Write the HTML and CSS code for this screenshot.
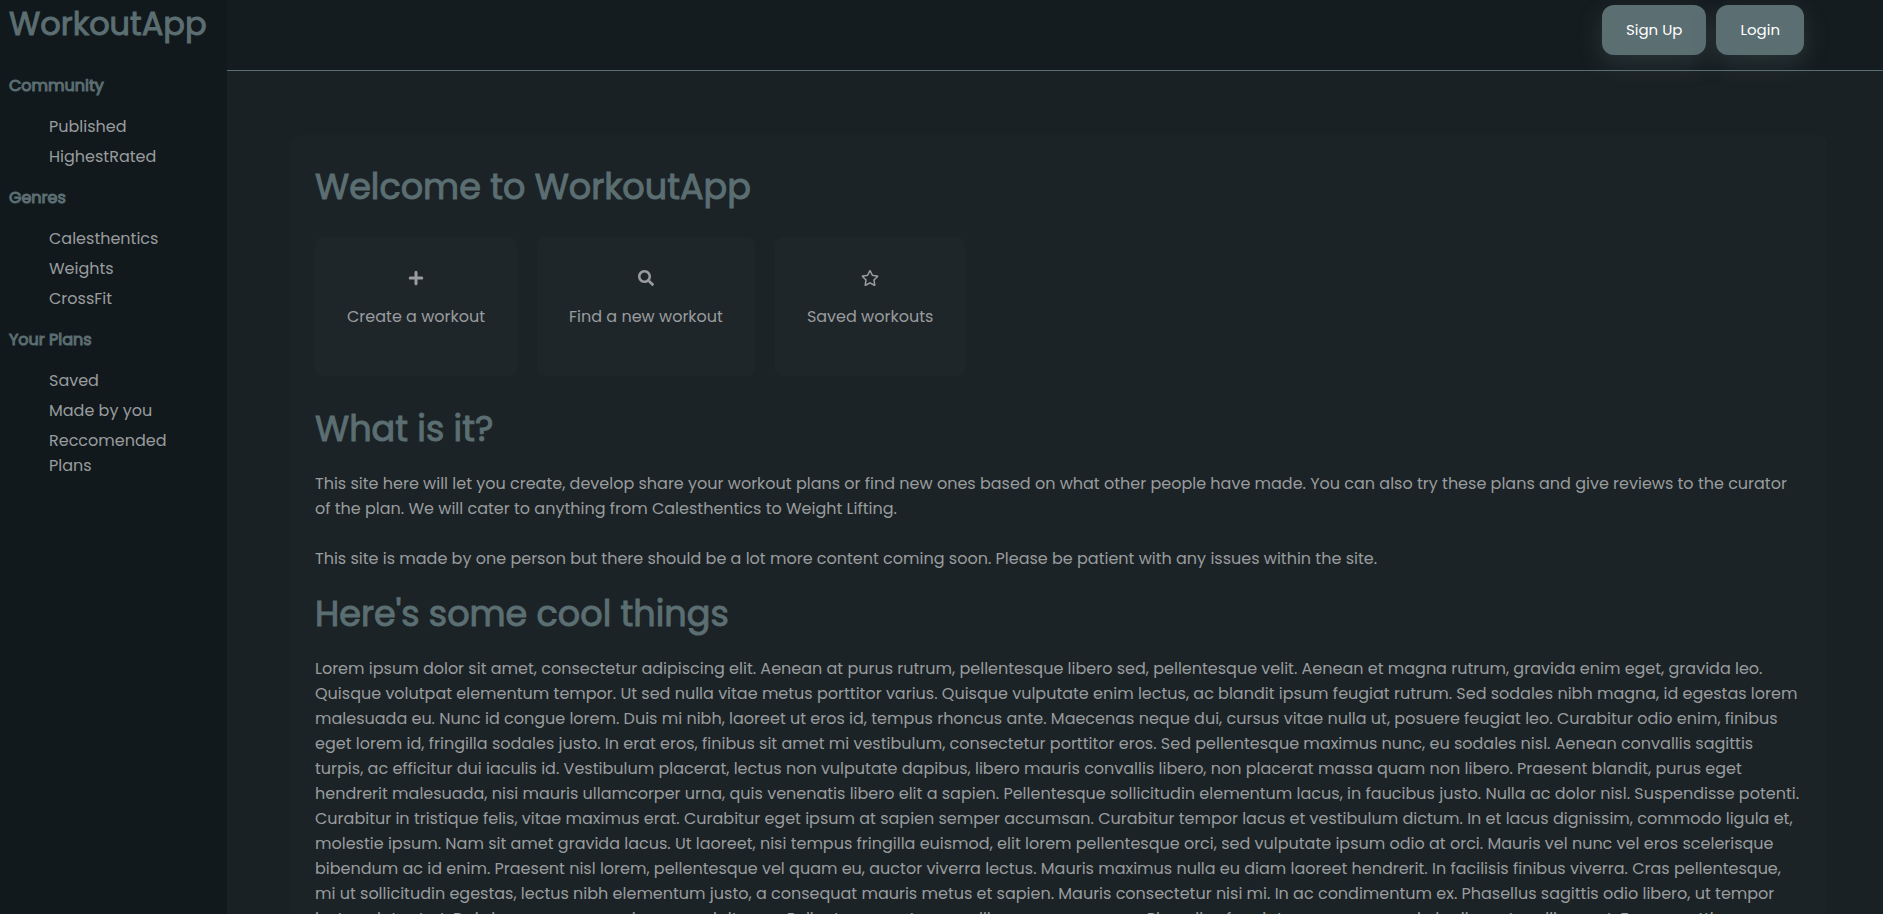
FILE: index.html
```html
<!DOCTYPE html>
<html lang="en">
<head>
<meta charset="utf-8">
<title>WorkoutApp</title>
<link rel="stylesheet" href="styles.css">
</head>
<body>
<div class="app">
  <aside class="sidebar">
    <h1 class="brand">WorkoutApp</h1>
    <nav class="nav">
      <h2 class="nav-title">Community</h2>
      <ul class="nav-list">
        <li><a href="#">Published</a></li>
        <li><a href="#">HighestRated</a></li>
      </ul>
      <h2 class="nav-title">Genres</h2>
      <ul class="nav-list">
        <li><a href="#">Calesthentics</a></li>
        <li><a href="#">Weights</a></li>
        <li><a href="#">CrossFit</a></li>
      </ul>
      <h2 class="nav-title">Your Plans</h2>
      <ul class="nav-list">
        <li><a href="#">Saved</a></li>
        <li><a href="#">Made by you</a></li>
        <li><a href="#">Reccomended Plans</a></li>
      </ul>
    </nav>
  </aside>
  <div class="page">
    <header class="topbar">
      <button class="button" type="button">Sign Up</button>
      <button class="button" type="button">Login</button>
    </header>
    <main class="panel">
      <h2 class="heading">Welcome to WorkoutApp</h2>
      <div class="cards">
        <a class="card" href="#">
          <svg class="icon" viewBox="0 0 16 16" aria-hidden="true"><path d="M8 2.2v11.6M2.2 8h11.6" fill="none" stroke="currentColor" stroke-width="3" stroke-linecap="round"/></svg>
          <span>Create a workout</span>
        </a>
        <a class="card" href="#">
          <svg class="icon" viewBox="0 0 512 512" aria-hidden="true"><path fill="currentColor" d="M505 442.700 405.300 343c-4.500-4.500-10.600-7-17-7H372c27.600-35.300 44-79.700 44-128C416 93.100 322.900 0 208 0S0 93.100 0 208s93.100 208 208 208c48.300 0 92.700-16.400 128-44v16.300c0 6.400 2.500 12.500 7 17l99.700 99.700c9.400 9.400 24.600 9.400 33.900 0l28.300-28.300c9.400-9.400 9.400-24.600.1-34zM208 336c-70.700 0-128-57.200-128-128 0-70.700 57.200-128 128-128 70.700 0 128 57.200 128 128 0 70.700-57.200 128-128 128z"/></svg>
          <span>Find a new workout</span>
        </a>
        <a class="card" href="#">
          <svg class="icon icon-star" viewBox="0 0 576 512" aria-hidden="true"><path fill="currentColor" d="M528.100 171.500L382 150.200 316.700 17.800c-11.700-23.600-45.600-23.900-57.400 0L194 150.200 47.900 171.500c-26.200 3.800-36.700 36.100-17.700 54.600l105.700 103-25 145.500c-4.500 26.300 23.200 46 46.400 33.700L288 439.600l130.700 68.700c23.200 12.200 50.900-7.400 46.400-33.700l-25-145.500 105.700-103c19-18.500 8.500-50.800-17.700-54.600zM388.600 312.300l23.700 138.400L288 385.400l-124.300 65.300 23.700-138.400-100.600-98 139-20.200 62.200-126 62.200 126 139 20.200-100.600 98z"/></svg>
          <span>Saved workouts</span>
        </a>
      </div>
      <h2 class="heading">What is it?</h2>
      <p class="text">This site here will let you create, develop share your workout plans or find new ones based on what other people have made. You can also try these plans and give reviews to the curator of the plan. We will cater to anything from Calesthentics to Weight Lifting.</p>
      <p class="text">This site is made by one person but there should be a lot more content coming soon. Please be patient with any issues within the site.</p>
      <h2 class="heading">Here's some cool things</h2>
      <p class="text">Lorem ipsum dolor sit amet, consectetur adipiscing elit. Aenean at purus rutrum, pellentesque libero sed, pellentesque velit. Aenean et magna rutrum, gravida enim eget, gravida leo.
      Quisque volutpat elementum tempor. Ut sed nulla vitae metus porttitor varius. Quisque vulputate enim lectus, ac blandit ipsum feugiat rutrum. Sed sodales nibh magna, id egestas lorem
      malesuada eu. Nunc id congue lorem. Duis mi nibh, laoreet ut eros id, tempus rhoncus ante. Maecenas neque dui, cursus vitae nulla ut, posuere feugiat leo. Curabitur odio enim, finibus
      eget lorem id, fringilla sodales justo. In erat eros, finibus sit amet mi vestibulum, consectetur porttitor eros. Sed pellentesque maximus nunc, eu sodales nisl. Aenean convallis sagittis
      turpis, ac efficitur dui iaculis id. Vestibulum placerat, lectus non vulputate dapibus, libero mauris convallis libero, non placerat massa quam non libero. Praesent blandit, purus eget
      hendrerit malesuada, nisi mauris ullamcorper urna, quis venenatis libero elit a sapien. Pellentesque sollicitudin elementum lacus, in faucibus justo. Nulla ac dolor nisl. Suspendisse potenti.
      Curabitur in tristique felis, vitae maximus erat. Curabitur eget ipsum at sapien semper accumsan. Curabitur tempor lacus et vestibulum dictum. In et lacus dignissim, commodo ligula et,
      molestie ipsum. Nam sit amet gravida lacus. Ut laoreet, nisi tempus fringilla euismod, elit lorem pellentesque orci, sed vulputate ipsum odio at orci. Mauris vel nunc vel eros scelerisque
      bibendum ac id enim. Praesent nisl lorem, pellentesque vel quam eu, auctor viverra lectus. Mauris maximus nulla eu diam laoreet hendrerit. In facilisis finibus viverra. Cras pellentesque,
      mi ut sollicitudin egestas, lectus nibh elementum justo, a consequat mauris metus et sapien. Mauris consectetur nisi mi. In ac condimentum ex. Phasellus sagittis odio libero, ut tempor
      justo volutpat at. Duis humus nec, mauris ac, suscipit urna. Pellentesque rutrum mollis massa a semper. Phasellus feugiat augue cursus mi, dapibus et mollis amet. Fusce mattis</p>
    </main>
  </div>
</div>
</body>
</html>
```
FILE: styles.css
```css
* { box-sizing: border-box; }
html, body { height: 100%; }
body {
  margin: 0;
  overflow: hidden;
  background: #1a2124;
  color: #999c9e;
  font-family: Poppins, Inter, "Open Sans", sans-serif;
  font-size: 16px;
  line-height: 25px;
}
a { color: inherit; text-decoration: none; }
.app { display: flex; height: 100vh; }
.sidebar {
  flex: 0 0 227px;
  padding: 0 9px;
  background: #12191c;
}
.brand {
  margin: 0 0 25px;
  color: #5b6e72;
  font-size: 32px;
  font-weight: 400;
  line-height: 48px;
  -webkit-text-stroke: 1px currentColor;
}
.nav-title {
  margin: 0 0 16px;
  color: #5b6e72;
  font-size: 16px;
  font-weight: 400;
  line-height: 25px;
  -webkit-text-stroke: 1px currentColor;
}
.nav-list {
  margin: 0 0 16px;
  padding: 0 16px 0 40px;
  list-style: none;
}
.nav-list li { margin-bottom: 5px; }
.page {
  flex: 1;
  min-width: 0;
}
.topbar {
  display: flex;
  justify-content: flex-end;
  align-items: flex-start;
  gap: 10px;
  height: 71px;
  padding: 5px 79px 0 0;
  border-bottom: 1px solid #5b6e72;
  background: #151c1f;
}
.button {
  padding: 0 24px 2px;
  height: 50px;
  border: 0;
  border-radius: 12px;
  background: #5b6e72;
  box-shadow: 0 8px 24px rgba(91, 110, 114, 0.3);
  color: #fff;
  font: inherit;
  font-size: 15px;
}
.panel {
  margin: 64px 56px 0 64px;
  padding: 24px;
  border-radius: 8px;
  background: #1c2326;
}
.heading {
  margin: 0 0 14px;
  color: #5b6e72;
  font-size: 35px;
  font-weight: 400;
  line-height: 56px;
  -webkit-text-stroke: 1px currentColor;
}
.cards {
  display: flex;
  gap: 20px;
  margin: 22px 0 25px;
}
.card {
  display: flex;
  flex-direction: column;
  align-items: center;
  gap: 18px;
  height: 139px;
  padding: 33px 32px;
  border-radius: 8px;
  background: #1f262a;
}
.icon { width: 16px; height: 16px; }
.icon-star { width: 18px; }
.text { margin: 0 0 15px; }
.text + .text { margin-top: 25px; }
```
